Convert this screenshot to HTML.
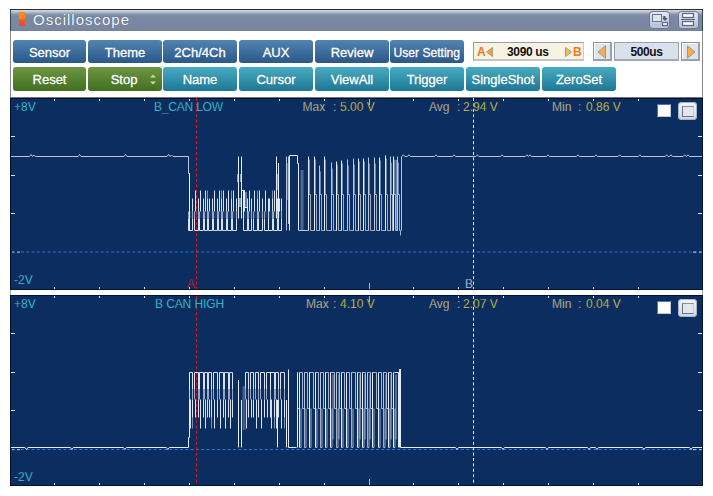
<!DOCTYPE html>
<html><head><meta charset="utf-8"><style>
html,body{margin:0;padding:0;background:#fff;}
body{width:713px;height:496px;overflow:hidden;position:relative;font-family:"Liberation Sans",sans-serif;}
.a{position:absolute}
.btn{position:absolute;height:23px;border-radius:3px;color:#fff;font-size:13px;text-align:center;line-height:25px;text-shadow:0 0 1px rgba(0,0,0,.35);-webkit-text-stroke:0.35px #fff;white-space:nowrap}
.blue{background:linear-gradient(#5284b0,#2a5889)}
.green{background:linear-gradient(#6c9644,#42701e)}
.teal{background:linear-gradient(#48abc0,#1d7896)}
.chk{width:12px;height:11px;background:#fff;border-top:1px solid #4a72b8;border-left:1px solid #4a72b8;border-right:1px solid #c0c8d8;border-bottom:1px solid #c0c8d8}
.rbtn{width:19px;height:18px;border-radius:4px;background:linear-gradient(#f4f6fa,#cfd6e4);box-shadow:inset 0 0 0 1px #aab4c8}
.rbtn .inner{position:absolute;left:4px;top:4px;width:10px;height:9px;background:#e2e6ee;border:1px solid #6c7280;border-right-color:#c8ccd6;border-top-color:#8a909c}
.tbtn{position:absolute;width:21px;height:18px;border-radius:4px;background:linear-gradient(#e8ecf4,#b4bfd2);box-shadow:inset 0 0 0 1px #6a7894}
</style></head><body>
<div class="a" style="left:10px;top:9px;width:693px;height:1px;background:#2c2c2c"></div>
<div class="a" style="left:10px;top:10px;width:1px;height:21px;background:#34464a"></div>
<div class="a" style="left:702px;top:10px;width:1px;height:21px;background:#34464a"></div>
<div class="a" style="left:10px;top:31px;width:1px;height:66px;background:#8a8a8a"></div>
<div class="a" style="left:702px;top:31px;width:1px;height:66px;background:#8a8a8a"></div>
<div class="a" style="left:11px;top:10px;width:691px;height:21px;background:linear-gradient(#d4dae4 0px,#b8c0d0 2px,#8c98b2 4px,#7c89a5 6px,#7a87a3 19px,#727e9a 21px)"></div>
<div class="a" style="left:19px;top:12px;width:6px;height:14px;background:linear-gradient(#ff8a10 0,#ff8a10 40%,#f05a28 60%,#e84830 100%)"></div>
<div class="a" style="left:33px;top:9px;font-size:15px;letter-spacing:1px;color:#f4f6fa;line-height:21px;text-shadow:0 0 1px rgba(40,50,70,.6)">Oscilloscope</div>
<div class="tbtn" style="left:649px;top:11px"><svg width="21" height="18" style="position:absolute;left:0;top:0"><rect x="3.5" y="3.5" width="9" height="7" fill="#dfe5ef" stroke="#6a7690" stroke-width="1"/><path d="M3.5 13.5 H12" stroke="#a8b8d0" stroke-dasharray="1 1"/><rect x="13.5" y="11.5" width="5" height="3" fill="#fff" stroke="#5c6882" stroke-width="1.2"/><path d="M14 5.5 L16 8 V5 M16 9.5 L14 7.5 H18 Z" stroke="#4c5870" stroke-width="1" fill="#4c5870"/></svg></div>
<div class="tbtn" style="left:678px;top:11px"><svg width="21" height="18" style="position:absolute;left:0;top:0"><rect x="4.5" y="2.5" width="11" height="4" fill="#fff" stroke="#5c6882" stroke-width="1.3"/><path d="M3 8.5 H17" stroke="#5c6882" stroke-width="1"/><rect x="4.5" y="10.5" width="11" height="4" fill="#fff" stroke="#5c6882" stroke-width="1.3"/></svg></div>
<div class="btn blue" style="left:13px;top:40px;width:73px;height:23px">Sensor</div><div class="btn blue" style="left:88px;top:40px;width:74px;height:23px">Theme</div><div class="btn blue" style="left:163px;top:40px;width:74px;height:23px">2Ch/4Ch</div><div class="btn blue" style="left:239px;top:40px;width:74px;height:23px">AUX</div><div class="btn blue" style="left:315px;top:40px;width:74px;height:23px">Review</div><div class="btn blue" style="left:390px;top:40px;width:74px;height:23px"><span style="display:inline-block;transform:scaleX(0.93)">User Setting</span></div><div class="btn green" style="left:13px;top:67px;width:73px;height:24px">Reset</div><div class="btn green" style="left:88px;top:67px;width:74px;height:24px"><span style="position:relative;left:-1px">Stop</span><svg class="ud" width="8" height="11" viewBox="0 0 8 11" style="position:absolute;left:61px;top:7px"><path d="M1 3.5 L4 0.5 L7 3.5 Z M1 7.5 L4 10.5 L7 7.5 Z" fill="#c8d8b0"/></svg></div><div class="btn teal" style="left:163px;top:67px;width:74px;height:24px">Name</div><div class="btn teal" style="left:239px;top:67px;width:74px;height:24px">Cursor</div><div class="btn teal" style="left:315px;top:67px;width:74px;height:24px">ViewAll</div><div class="btn teal" style="left:390px;top:67px;width:74px;height:24px">Trigger</div><div class="btn teal" style="left:466px;top:67px;width:74px;height:24px">SingleShot</div><div class="btn teal" style="left:542px;top:67px;width:74px;height:24px">ZeroSet</div>
<div class="a" style="left:473px;top:42px;width:109px;height:16px;background:#f6f3e4;border-top:1px solid #9a9ea8;border-left:1px solid #9a9ea8;border-right:1px solid #c8ccd4;border-bottom:2px solid #c4c4c0"></div>
<div class="a" style="left:477px;top:43px;font-size:12px;font-weight:bold;color:#f07818;line-height:19px">A</div>
<div class="a" style="left:573px;top:43px;font-size:12px;font-weight:bold;color:#f07818;line-height:19px">B</div>
<svg class="a" style="left:486px;top:47px" width="7" height="10"><path d="M6.5 0.5 L0.5 5 L6.5 9.5Z" fill="#f0a050" stroke="#a8a070" stroke-width="1"/></svg>
<svg class="a" style="left:565px;top:47px" width="7" height="10"><path d="M0.5 0.5 L6.5 5 L0.5 9.5Z" fill="#e8c060" stroke="#a8a070" stroke-width="1"/></svg>
<div class="a" style="left:507px;top:43px;font-size:12px;font-weight:bold;letter-spacing:-0.35px;color:#111;line-height:19px">3090 us</div>
<div class="a" style="left:593px;top:42px;width:16px;height:16px;background:#dde4ee;border:1px solid #8c92a2;border-right:2px solid #9aa0ac;border-bottom:2px solid #9aa0ac;box-shadow:inset 1px 1px 0 #fff"></div>
<div class="a" style="left:614px;top:42px;width:63px;height:16px;background:#d8e2ec;border:1px solid #9aa0ae;border-bottom:2px solid #a4a8b4"></div>
<div class="a" style="left:681px;top:42px;width:16px;height:16px;background:#dde4ee;border:1px solid #8c92a2;border-right:2px solid #9aa0ac;border-bottom:2px solid #9aa0ac;box-shadow:inset 1px 1px 0 #fff"></div>
<svg class="a" style="left:597px;top:45px" width="10" height="14"><path d="M8.5 0.8 L1 7 L8.5 13.2Z" fill="#ffac48" stroke="#8a8a8a" stroke-width="0.8"/></svg>
<svg class="a" style="left:686px;top:45px" width="10" height="14"><path d="M1.5 0.8 L9 7 L1.5 13.2Z" fill="#ffac48" stroke="#8a8a8a" stroke-width="0.8"/></svg>
<div class="a" style="left:614px;top:43px;width:65px;text-align:center;font-size:12px;font-weight:bold;letter-spacing:-0.4px;color:#111;line-height:19px">500us</div>
<svg class="a" style="left:0;top:0" width="713" height="496" viewBox="0 0 713 496" font-family="Liberation Sans, sans-serif"><rect x="10" y="97" width="693" height="1" fill="#707680" /><rect x="10" y="98" width="693" height="192" fill="#02122c" /><rect x="11" y="99" width="691" height="190" fill="#0b2d5f" /><rect x="10" y="295" width="693" height="191" fill="#02122c" /><rect x="11" y="296" width="691" height="189" fill="#0b2d5f" /><rect x="10" y="290" width="693" height="5" fill="#ffffff" /><rect x="10" y="290" width="1" height="5" fill="#a8a8a8" /><rect x="702" y="290" width="1" height="5" fill="#a8a8a8" /><rect x="54" y="99" width="1" height="2" fill="#dfe6f0" /><rect x="54" y="287" width="1" height="2" fill="#dfe6f0" /><rect x="54" y="296" width="1" height="2" fill="#dfe6f0" /><rect x="54" y="483" width="1" height="2" fill="#dfe6f0" /><rect x="99" y="99" width="1" height="2" fill="#dfe6f0" /><rect x="99" y="287" width="1" height="2" fill="#dfe6f0" /><rect x="99" y="296" width="1" height="2" fill="#dfe6f0" /><rect x="99" y="483" width="1" height="2" fill="#dfe6f0" /><rect x="144" y="99" width="1" height="2" fill="#dfe6f0" /><rect x="144" y="287" width="1" height="2" fill="#dfe6f0" /><rect x="144" y="296" width="1" height="2" fill="#dfe6f0" /><rect x="144" y="483" width="1" height="2" fill="#dfe6f0" /><rect x="189" y="99" width="1" height="2" fill="#dfe6f0" /><rect x="189" y="287" width="1" height="2" fill="#dfe6f0" /><rect x="189" y="296" width="1" height="2" fill="#dfe6f0" /><rect x="189" y="483" width="1" height="2" fill="#dfe6f0" /><rect x="234" y="99" width="1" height="2" fill="#dfe6f0" /><rect x="234" y="287" width="1" height="2" fill="#dfe6f0" /><rect x="234" y="296" width="1" height="2" fill="#dfe6f0" /><rect x="234" y="483" width="1" height="2" fill="#dfe6f0" /><rect x="279" y="99" width="1" height="2" fill="#dfe6f0" /><rect x="279" y="287" width="1" height="2" fill="#dfe6f0" /><rect x="279" y="296" width="1" height="2" fill="#dfe6f0" /><rect x="279" y="483" width="1" height="2" fill="#dfe6f0" /><rect x="324" y="99" width="1" height="2" fill="#dfe6f0" /><rect x="324" y="287" width="1" height="2" fill="#dfe6f0" /><rect x="324" y="296" width="1" height="2" fill="#dfe6f0" /><rect x="324" y="483" width="1" height="2" fill="#dfe6f0" /><rect x="369" y="99" width="1" height="6" fill="#a6b6d4" /><rect x="369" y="283" width="1" height="6" fill="#a6b6d4" /><rect x="369" y="296" width="1" height="6" fill="#a6b6d4" /><rect x="369" y="479" width="1" height="6" fill="#a6b6d4" /><rect x="413" y="99" width="1" height="2" fill="#dfe6f0" /><rect x="413" y="287" width="1" height="2" fill="#dfe6f0" /><rect x="413" y="296" width="1" height="2" fill="#dfe6f0" /><rect x="413" y="483" width="1" height="2" fill="#dfe6f0" /><rect x="458" y="99" width="1" height="2" fill="#dfe6f0" /><rect x="458" y="287" width="1" height="2" fill="#dfe6f0" /><rect x="458" y="296" width="1" height="2" fill="#dfe6f0" /><rect x="458" y="483" width="1" height="2" fill="#dfe6f0" /><rect x="503" y="99" width="1" height="2" fill="#dfe6f0" /><rect x="503" y="287" width="1" height="2" fill="#dfe6f0" /><rect x="503" y="296" width="1" height="2" fill="#dfe6f0" /><rect x="503" y="483" width="1" height="2" fill="#dfe6f0" /><rect x="548" y="99" width="1" height="2" fill="#dfe6f0" /><rect x="548" y="287" width="1" height="2" fill="#dfe6f0" /><rect x="548" y="296" width="1" height="2" fill="#dfe6f0" /><rect x="548" y="483" width="1" height="2" fill="#dfe6f0" /><rect x="593" y="99" width="1" height="2" fill="#dfe6f0" /><rect x="593" y="287" width="1" height="2" fill="#dfe6f0" /><rect x="593" y="296" width="1" height="2" fill="#dfe6f0" /><rect x="593" y="483" width="1" height="2" fill="#dfe6f0" /><rect x="638" y="99" width="1" height="2" fill="#dfe6f0" /><rect x="638" y="287" width="1" height="2" fill="#dfe6f0" /><rect x="638" y="296" width="1" height="2" fill="#dfe6f0" /><rect x="638" y="483" width="1" height="2" fill="#dfe6f0" /><rect x="11" y="136" width="4" height="1" fill="#dfe6f0" /><rect x="698" y="136" width="4" height="1" fill="#dfe6f0" /><rect x="11" y="175" width="4" height="1" fill="#dfe6f0" /><rect x="698" y="175" width="4" height="1" fill="#dfe6f0" /><rect x="11" y="213" width="4" height="1" fill="#dfe6f0" /><rect x="698" y="213" width="4" height="1" fill="#dfe6f0" /><rect x="11" y="333" width="4" height="1" fill="#dfe6f0" /><rect x="698" y="333" width="4" height="1" fill="#dfe6f0" /><rect x="11" y="372" width="4" height="1" fill="#dfe6f0" /><rect x="698" y="372" width="4" height="1" fill="#dfe6f0" /><rect x="11" y="410" width="4" height="1" fill="#dfe6f0" /><rect x="698" y="410" width="4" height="1" fill="#dfe6f0" /><line x1="21" y1="252" x2="702" y2="252" stroke="#2f72d0" stroke-width="1.1" stroke-dasharray="3 2.3"/><rect x="12" y="251.5" width="2.5" height="1.2" fill="#a8b4c8" /><rect x="17" y="251.5" width="3" height="1.2" fill="#a8b4c8" /><rect x="693" y="251.5" width="3" height="1.2" fill="#a8b4c8" /><rect x="699" y="251.5" width="2.5" height="1.2" fill="#a8b4c8" /><line x1="21" y1="449.5" x2="702" y2="449.5" stroke="#2f78d8" stroke-width="1.2" stroke-dasharray="3 2.3"/><rect x="12" y="449" width="2.5" height="1.2" fill="#a8b4c8" /><rect x="17" y="449" width="3" height="1.2" fill="#a8b4c8" /><rect x="693" y="449" width="3" height="1.2" fill="#a8b4c8" /><rect x="699" y="449" width="2.5" height="1.2" fill="#a8b4c8" /><line x1="196.5" y1="98" x2="196.5" y2="289" stroke="#e01818" stroke-width="1" stroke-dasharray="3 2.4"/><line x1="196.5" y1="296" x2="196.5" y2="485" stroke="#e01818" stroke-width="1" stroke-dasharray="3 2.4"/><line x1="473.5" y1="98" x2="473.5" y2="289" stroke="#e8eef8" stroke-width="1" stroke-dasharray="3 2.4"/><line x1="473.5" y1="296" x2="473.5" y2="485" stroke="#e8eef8" stroke-width="1" stroke-dasharray="3 2.4"/><path d="M11 156.5 H29.5 L31 154.5 L32.5 156.5 L34 155 L35.5 156.5 H78 L79.5 154.5 L81 156.5 H124 L125.5 154.5 L127 156.5 H167 L168.5 154.5 L170 156.5 L171.5 155 L173 156.5 H188.5 V173.5 H189.5 V211" stroke="#b8c6dc" stroke-width="1" fill="none" stroke-opacity="1"/><path d=" M188.5 214.5 H193.5 M194.5 214.5 H199.5 M199.5 214.5 H204.5 M204.5 214.5 H208.5 M208.5 214.5 H213.5 M213.5 214.5 H218.5 M218.5 214.5 H222.5 M222.5 214.5 H227.5 M227.5 214.5 H232.5 M232.5 214.5 H237.5" stroke="#7890b8" stroke-width="7" fill="none" stroke-opacity="0.15"/><path d=" M207.5 198.5 V190.5 M221.5 198.5 V190.5 M231.5 198.5 V190.5" stroke="#7890b8" stroke-width="1" fill="none" stroke-opacity="1"/><path d=" M188.5 218.5 V211.5 M192.5 218.5 V211.5 M194.5 218.5 V211.5 M198.5 218.5 V211.5 M199.5 218.5 V211.5 M203.5 218.5 V211.5 M204.5 218.5 V211.5 M207.5 218.5 V211.5 M208.5 218.5 V211.5 M212.5 218.5 V211.5 M213.5 218.5 V211.5 M217.5 218.5 V211.5 M218.5 218.5 V211.5 M221.5 218.5 V211.5 M222.5 218.5 V211.5 M226.5 218.5 V211.5 M227.5 218.5 V211.5 M231.5 218.5 V211.5 M232.5 218.5 V211.5 M236.5 218.5 V211.5" stroke="#b8c6dc" stroke-width="1" fill="none" stroke-opacity="0.8"/><path d=" M189.5 198.5 V211.5 M188.5 218.5 V230.5 H192.5 V218.5 M192.5 211.5 V198.5 M195.5 190.5 V211.5 M194.5 218.5 V230.5 H198.5 V218.5 M198.5 211.5 V198.5 M200.5 190.5 V211.5 M199.5 218.5 V230.5 H203.5 V218.5 M203.5 211.5 V198.5 M205.5 190.5 V211.5 M204.5 218.5 V230.5 H207.5 V218.5 M207.5 211.5 V198.5 M209.5 198.5 V211.5 M208.5 218.5 V230.5 H212.5 V218.5 M212.5 211.5 V198.5 M214.5 190.5 V211.5 M213.5 218.5 V230.5 H217.5 V218.5 M217.5 211.5 V198.5 M219.5 190.5 V211.5 M218.5 218.5 V230.5 H221.5 V218.5 M221.5 211.5 V198.5 M223.5 190.5 V211.5 M222.5 218.5 V230.5 H226.5 V218.5 M226.5 211.5 V198.5 M228.5 190.5 V211.5 M227.5 218.5 V230.5 H231.5 V218.5 M231.5 211.5 V198.5 M233.5 190.5 V211.5 M232.5 218.5 V230.5 H236.5 V218.5 M236.5 211.5 V198.5" stroke="#e4ecf6" stroke-width="1" fill="none" stroke-opacity="0.95"/><path d=" M243.5 214.5 H248.5 M248.5 214.5 H252.5 M253.5 214.5 H258.5 M258.5 214.5 H263.5 M264.5 214.5 H269.5 M268.5 214.5 H273.5 M273.5 214.5 H278.5 M278.5 214.5 H282.5" stroke="#7890b8" stroke-width="7" fill="none" stroke-opacity="0.15"/><path d=" M257.5 198.5 V190.5 M272.5 198.5 V190.5" stroke="#7890b8" stroke-width="1" fill="none" stroke-opacity="1"/><path d=" M243.5 218.5 V211.5 M247.5 218.5 V211.5 M248.5 218.5 V211.5 M251.5 218.5 V211.5 M253.5 218.5 V211.5 M257.5 218.5 V211.5 M258.5 218.5 V211.5 M262.5 218.5 V211.5 M264.5 218.5 V211.5 M268.5 218.5 V211.5 M268.5 218.5 V211.5 M272.5 218.5 V211.5 M273.5 218.5 V211.5 M277.5 218.5 V211.5 M278.5 218.5 V211.5 M281.5 218.5 V211.5" stroke="#b8c6dc" stroke-width="1" fill="none" stroke-opacity="0.8"/><path d=" M244.5 190.5 V211.5 M243.5 218.5 V230.5 H247.5 V218.5 M247.5 211.5 V198.5 M249.5 190.5 V211.5 M248.5 218.5 V230.5 H251.5 V218.5 M251.5 211.5 V198.5 M254.5 190.5 V211.5 M253.5 218.5 V230.5 H257.5 V218.5 M257.5 211.5 V198.5 M259.5 190.5 V211.5 M258.5 218.5 V230.5 H262.5 V218.5 M262.5 211.5 V198.5 M265.5 190.5 V211.5 M264.5 218.5 V230.5 H268.5 V218.5 M268.5 211.5 V198.5 M269.5 198.5 V211.5 M268.5 218.5 V230.5 H272.5 V218.5 M272.5 211.5 V198.5 M274.5 190.5 V211.5 M273.5 218.5 V230.5 H277.5 V218.5 M277.5 211.5 V198.5 M279.5 198.5 V211.5 M278.5 218.5 V230.5 H281.5 V218.5 M281.5 211.5 V198.5" stroke="#e4ecf6" stroke-width="1" fill="none" stroke-opacity="0.95"/><path d="M189.5 173 V230.5 M238.5 218.5 V156.5 M241.5 218.5 V156.5 M241.5 190.5 H244.5 V207.5 H247.5 V211.5 M243.5 190.5 V218.5" stroke="#e4ecf6" stroke-width="1" fill="none" stroke-opacity="1"/><path d="M238 174 V182 M241 174 V182 M240 198 V207" stroke="#e4ecf6" stroke-width="2" fill="none" stroke-opacity="0.6"/><path d="M246 192 V207" stroke="#7890b8" stroke-width="2" fill="none" stroke-opacity="0.8"/><path d="M276.5 218.5 V156.5 M278.5 218.5 V163" stroke="#e4ecf6" stroke-width="1" fill="none" stroke-opacity="1"/><path d="M277.5 174 V190" stroke="#e4ecf6" stroke-width="2" fill="none" stroke-opacity="0.5"/><path d="M287 163 V200" stroke="#7890b8" stroke-width="2" fill="none" stroke-opacity="0.6"/><path d="M286.5 230.5 V156.5 M288.5 224 V156.5" stroke="#b8c6dc" stroke-width="1" fill="none" stroke-opacity="1"/><path d="M289.5 230.5 V155.5 H297.5 V163.5 H298.5 V230.5" stroke="#e4ecf6" stroke-width="1" fill="none" stroke-opacity="1"/><path d="M302 230.5 V170" stroke="#7890b8" stroke-width="3" fill="none" stroke-opacity="0.6"/><path d="M299 230.5 H307" stroke="#b8c6dc" stroke-width="1" fill="none" stroke-opacity="1"/><path d=" M309.5 194.5 V159.5 M315.5 194.5 V159.5 M320.5 194.5 V171.5 M325.5 194.5 V159.5 M332.5 194.5 V168.5 M337.5 194.5 V164.5 M342.5 194.5 V163.5 M348.5 194.5 V165.5 M354.5 194.5 V164.5 M359.5 194.5 V161.5 M364.5 194.5 V161.5 M369.5 194.5 V163.5 M375.5 194.5 V163.5 M380.5 194.5 V160.5 M386.5 194.5 V158.5 M391.5 194.5 V162.5 M394.5 194.5 V159.5 M398.5 194.5 V162.5" stroke="#7890b8" stroke-width="1" fill="none" stroke-opacity="0.9"/><path d="M299 230.5 H308.5 V194.5 H310.5 V230.5 H314.5 V194.5 H316.5 V230.5 H319.5 V194.5 H321.5 V230.5 H324.5 V194.5 H326.5 V230.5 H331.5 V194.5 H333.5 V230.5 H336.5 V194.5 H338.5 V230.5 H341.5 V194.5 H343.5 V230.5 H347.5 V194.5 H349.5 V230.5 H353.5 V194.5 H355.5 V230.5 H358.5 V194.5 H360.5 V230.5 H363.5 V194.5 H365.5 V230.5 H368.5 V194.5 H370.5 V230.5 H374.5 V194.5 H376.5 V230.5 H379.5 V194.5 H381.5 V230.5 H385.5 V194.5 H387.5 V230.5 H390.5 V194.5 H392.5 V230.5 H393.5 V194.5 H395.5 V230.5 H397.5 V194.5 H399.5 V230.5 H400.5 V235.5" stroke="#b8c6dc" stroke-width="1" fill="none" stroke-opacity="0.85"/><path d=" M319.5 230.5 V165.5 M331.5 230.5 V162.5 M347.5 230.5 V159.5 M353.5 230.5 V158.5 M368.5 230.5 V157.5 M374.5 230.5 V157.5 M390.5 230.5 V156.5 M397.5 230.5 V156.5" stroke="#b8c6dc" stroke-width="1" fill="none" stroke-opacity="1"/><path d=" M308.5 230.5 V156.5 M314.5 230.5 V156.5 M324.5 230.5 V156.5 M336.5 230.5 V161.5 M341.5 230.5 V160.5 M358.5 230.5 V158.5 M363.5 230.5 V158.5 M379.5 230.5 V157.5 M385.5 230.5 V155.5 M393.5 230.5 V156.5" stroke="#e4ecf6" stroke-width="1" fill="none" stroke-opacity="1"/><path d="M396.5 230.5 V160" stroke="#b8c6dc" stroke-width="2" fill="none" stroke-opacity="0.6"/><path d="M401.5 230.5 V156.5 H401.9 L403.4 154.8 L404.9 156.5 H407.5 L409.0 154.8 L410.5 156.5 H434.5 L436.0 154.8 L437.5 156.5 H452.5 L454.0 154.8 L455.5 156.5 H475.9 L477.4 154.8 L478.9 156.5 H500.5 L502.0 154.8 L503.5 156.5 H525.3 L526.8 154.8 L528.3 156.5 H528.5 L530.0 154.8 L531.5 156.5 H546.5 L548.0 154.8 L549.5 156.5 H576.5 L578.0 154.8 L579.5 156.5 H594.5 L596.0 154.8 L597.5 156.5 H618.1 L619.6 154.8 L621.1 156.5 H638.3 L639.8 154.8 L641.3 156.5 H665.2 L666.7 154.8 L668.2 156.5 H669.5 L671.0 154.8 L672.5 156.5 H683.1 L684.6 154.8 L686.1 156.5 H686.5 L688.0 154.8 L689.5 156.5 H702" stroke="#b8c6dc" stroke-width="1" fill="none" stroke-opacity="1"/><path d="M11 447.5 H24.9 L26.4 449.5 L27.9 447.5 H70.4 L71.9 449.5 L73.4 447.5 H123.4 L124.9 449.5 L126.4 447.5 H166.3 L167.8 449.5 L169.3 447.5 H188.5 V437.5 H189.5 V372.5" stroke="#e4ecf6" stroke-width="1" fill="none" stroke-opacity="1"/><path d=" M192.5 417.5 V428.5 M211.5 417.5 V428.5" stroke="#7890b8" stroke-width="1" fill="none" stroke-opacity="1"/><path d=" M189.5 389.5 V399.5 M192.5 389.5 V399.5 M194.5 389.5 V399.5 M198.5 389.5 V399.5 M199.5 389.5 V399.5 M203.5 389.5 V399.5 M204.5 389.5 V399.5 M207.5 389.5 V399.5 M208.5 389.5 V399.5 M211.5 389.5 V399.5 M213.5 389.5 V399.5 M217.5 389.5 V399.5 M219.5 389.5 V399.5 M223.5 389.5 V399.5 M224.5 389.5 V399.5 M228.5 389.5 V399.5 M229.5 389.5 V399.5 M232.5 389.5 V399.5" stroke="#b8c6dc" stroke-width="1" fill="none" stroke-opacity="0.8"/><path d=" M190.5 428.5 V399.5 M189.5 389.5 V372.5 H192.5 V389.5 M192.5 399.5 V417.5 M195.5 417.5 V399.5 M194.5 389.5 V372.5 H198.5 V389.5 M198.5 399.5 V417.5 M200.5 428.5 V399.5 M199.5 389.5 V372.5 H203.5 V389.5 M203.5 399.5 V417.5 M205.5 428.5 V399.5 M204.5 389.5 V372.5 H207.5 V389.5 M207.5 399.5 V417.5 M209.5 417.5 V399.5 M208.5 389.5 V372.5 H211.5 V389.5 M211.5 399.5 V417.5 M214.5 428.5 V399.5 M213.5 389.5 V372.5 H217.5 V389.5 M217.5 399.5 V417.5 M220.5 428.5 V399.5 M219.5 389.5 V372.5 H223.5 V389.5 M223.5 399.5 V417.5 M225.5 428.5 V399.5 M224.5 389.5 V372.5 H228.5 V389.5 M228.5 399.5 V417.5 M230.5 428.5 V399.5 M229.5 389.5 V372.5 H232.5 V389.5 M232.5 399.5 V417.5" stroke="#e4ecf6" stroke-width="1" fill="none" stroke-opacity="0.95"/><path d=" M274.5 417.5 V428.5 M284.5 417.5 V428.5" stroke="#7890b8" stroke-width="1" fill="none" stroke-opacity="1"/><path d=" M245.5 389.5 V399.5 M248.5 389.5 V399.5 M250.5 389.5 V399.5 M253.5 389.5 V399.5 M255.5 389.5 V399.5 M258.5 389.5 V399.5 M260.5 389.5 V399.5 M264.5 389.5 V399.5 M266.5 389.5 V399.5 M270.5 389.5 V399.5 M270.5 389.5 V399.5 M274.5 389.5 V399.5 M275.5 389.5 V399.5 M278.5 389.5 V399.5 M280.5 389.5 V399.5 M284.5 389.5 V399.5" stroke="#b8c6dc" stroke-width="1" fill="none" stroke-opacity="0.8"/><path d=" M246.5 428.5 V399.5 M245.5 389.5 V372.5 H248.5 V389.5 M248.5 399.5 V417.5 M251.5 417.5 V399.5 M250.5 389.5 V372.5 H253.5 V389.5 M253.5 399.5 V417.5 M256.5 428.5 V399.5 M255.5 389.5 V372.5 H258.5 V389.5 M258.5 399.5 V417.5 M261.5 428.5 V399.5 M260.5 389.5 V372.5 H264.5 V389.5 M264.5 399.5 V417.5 M267.5 417.5 V399.5 M266.5 389.5 V372.5 H270.5 V389.5 M270.5 399.5 V417.5 M271.5 428.5 V399.5 M270.5 389.5 V372.5 H274.5 V389.5 M274.5 399.5 V417.5 M276.5 428.5 V399.5 M275.5 389.5 V372.5 H278.5 V389.5 M278.5 399.5 V417.5 M281.5 428.5 V399.5 M280.5 389.5 V372.5 H284.5 V389.5 M284.5 399.5 V417.5" stroke="#e4ecf6" stroke-width="1" fill="none" stroke-opacity="0.95"/><path d="M238.5 380 V447.5 M241.5 400 V447.5 M277.5 400 V447.5 M286.5 400 V447.5 M288.5 369.5 V447.5 H296.5" stroke="#e4ecf6" stroke-width="1" fill="none" stroke-opacity="1"/><path d="M244 386 V430" stroke="#7890b8" stroke-width="3" fill="none" stroke-opacity="0.5"/><path d=" M299.5 447.5 H301.0 V408.5 M304.5 372.5 V447.5 M304.5 447.5 H306.0 V408.5 M309.5 447.5 H311.0 V408.5 M315.5 447.5 H317.0 V408.5 M320.5 372.5 V447.5 M320.5 447.5 H322.0 V408.5 M325.5 447.5 H327.0 V408.5 M330.5 447.5 H332.0 V408.5 M333.0 374.5 V439.5 M336.5 372.5 V447.5 M336.5 447.5 H338.0 V408.5 M339.0 374.5 V439.5 M341.5 447.5 H343.0 V408.5 M346.5 447.5 H348.0 V408.5 M351.5 372.5 V447.5 M351.5 447.5 H353.0 V408.5 M357.5 447.5 H359.0 V408.5 M360.0 374.5 V439.5 M362.5 447.5 H364.0 V408.5 M365.0 374.5 V439.5 M367.5 372.5 V447.5 M367.5 447.5 H369.0 V408.5 M370.0 374.5 V439.5 M372.5 447.5 H374.0 V408.5 M378.5 447.5 H380.0 V408.5 M383.5 372.5 V447.5 M383.5 447.5 H385.0 V408.5 M386.0 374.5 V439.5 M388.5 447.5 H390.0 V408.5 M391.0 374.5 V439.5 M393.5 447.5 H395.0 V408.5 M396.0 374.5 V439.5" stroke="#b8c6dc" stroke-width="1" fill="none" stroke-opacity="0.85"/><path d="M298 372.5 H297.5 V408.5 H299.5 V372.5 H302.5 V408.5 H304.5 V372.5 H307.5 V408.5 H309.5 V372.5 H313.5 V408.5 H315.5 V372.5 H318.5 V408.5 H320.5 V372.5 H323.5 V408.5 H325.5 V372.5 H328.5 V408.5 H330.5 V372.5 H334.5 V408.5 H336.5 V372.5 H339.5 V408.5 H341.5 V372.5 H344.5 V408.5 H346.5 V372.5 H349.5 V408.5 H351.5 V372.5 H355.5 V408.5 H357.5 V372.5 H360.5 V408.5 H362.5 V372.5 H365.5 V408.5 H367.5 V372.5 H370.5 V408.5 H372.5 V372.5 H376.5 V408.5 H378.5 V372.5 H381.5 V408.5 H383.5 V372.5 H386.5 V408.5 H388.5 V372.5 H391.5 V408.5 H393.5 V372.5" stroke="#b8c6dc" stroke-width="1" fill="none" stroke-opacity="0.9"/><path d="M297.5 447.5 V372.5 M299.5 372.5 V447.5 M309.5 372.5 V447.5 M315.5 372.5 V447.5 M325.5 372.5 V447.5 M330.5 372.5 V447.5 M341.5 372.5 V447.5 M346.5 372.5 V447.5 M357.5 372.5 V447.5 M362.5 372.5 V447.5 M372.5 372.5 V447.5 M378.5 372.5 V447.5 M388.5 372.5 V447.5 M393.5 372.5 V447.5 M394.5 372.5 H398.5 H398.5 V447.5 M399.5 447.5 V369 M400.5 369 V447.5 H455.5 L457.0 449.5 L458.5 447.5 H501.5 L503.0 449.5 L504.5 447.5 H545.5 L547.0 449.5 L548.5 447.5 H587.5 L589.0 449.5 L590.5 447.5 H595.5 L597.0 449.5 L598.5 447.5 H642.5 L644.0 449.5 L645.5 447.5 H689.5 L691.0 449.5 L692.5 447.5 H702" stroke="#e4ecf6" stroke-width="1" fill="none" stroke-opacity="1"/><text x="14" y="111" fill="#48d8e0" stroke="#0b2d5f" stroke-width="0.25" font-size="12" >+8V</text><text x="14" y="284" fill="#48d8e0" stroke="#0b2d5f" stroke-width="0.25" font-size="12" >-2V</text><text x="14" y="308" fill="#48d8e0" stroke="#0b2d5f" stroke-width="0.25" font-size="12" >+8V</text><text x="14" y="481" fill="#48d8e0" stroke="#0b2d5f" stroke-width="0.25" font-size="12" >-2V</text><text x="154" y="111" fill="#48d8e0" stroke="#0b2d5f" stroke-width="0.25" font-size="12" letter-spacing="-0.2">B_CAN LOW</text><text x="155" y="308" fill="#48d8e0" stroke="#0b2d5f" stroke-width="0.25" font-size="12" letter-spacing="-0.1">B CAN HIGH</text><text x="302.5" y="111" fill="#e0d49a" stroke="#0b2d5f" stroke-width="0.25" font-size="12" >Max</text><text x="333" y="111" fill="#e0d49a" stroke="#0b2d5f" stroke-width="0.25" font-size="12" >:</text><text x="340" y="111" fill="#e2d840" stroke="#0b2d5f" stroke-width="0.25" font-size="12" >5.00 V</text><text x="429" y="111" fill="#e0d49a" stroke="#0b2d5f" stroke-width="0.25" font-size="12" >Avg</text><text x="457" y="111" fill="#e0d49a" stroke="#0b2d5f" stroke-width="0.25" font-size="12" >:</text><text x="463" y="111" fill="#e2d840" stroke="#0b2d5f" stroke-width="0.25" font-size="12" >2.94 V</text><text x="552" y="111" fill="#e0d49a" stroke="#0b2d5f" stroke-width="0.25" font-size="12" >Min</text><text x="578" y="111" fill="#e0d49a" stroke="#0b2d5f" stroke-width="0.25" font-size="12" >:</text><text x="586" y="111" fill="#e2d840" stroke="#0b2d5f" stroke-width="0.25" font-size="12" >0.86 V</text><text x="306" y="308" fill="#e0d49a" stroke="#0b2d5f" stroke-width="0.25" font-size="12" >Max</text><text x="333" y="308" fill="#e0d49a" stroke="#0b2d5f" stroke-width="0.25" font-size="12" >:</text><text x="340" y="308" fill="#e2d840" stroke="#0b2d5f" stroke-width="0.25" font-size="12" >4.10 V</text><text x="429" y="308" fill="#e0d49a" stroke="#0b2d5f" stroke-width="0.25" font-size="12" >Avg</text><text x="457" y="308" fill="#e0d49a" stroke="#0b2d5f" stroke-width="0.25" font-size="12" >:</text><text x="463" y="308" fill="#e2d840" stroke="#0b2d5f" stroke-width="0.25" font-size="12" >2.07 V</text><text x="552" y="308" fill="#e0d49a" stroke="#0b2d5f" stroke-width="0.25" font-size="12" >Min</text><text x="578" y="308" fill="#e0d49a" stroke="#0b2d5f" stroke-width="0.25" font-size="12" >:</text><text x="586" y="308" fill="#e2d840" stroke="#0b2d5f" stroke-width="0.25" font-size="12" >0.04 V</text><text x="187" y="288" fill="#e02020" stroke="#0b2d5f" stroke-width="0.25" font-size="12" >A</text><text x="465" y="288" fill="#c8d8f0" stroke="#0b2d5f" stroke-width="0.25" font-size="12" >B</text></svg>
<div class="a chk" style="left:657px;top:104px"></div><div class="a rbtn" style="left:678px;top:102px"><div class="inner"></div></div>
<div class="a chk" style="left:657px;top:301px"></div><div class="a rbtn" style="left:678px;top:299px"><div class="inner"></div></div>
</body></html>
